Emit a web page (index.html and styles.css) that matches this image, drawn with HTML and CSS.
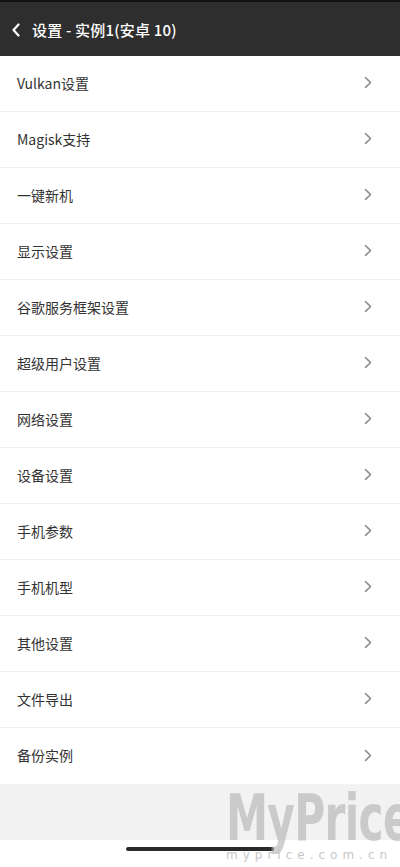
FILE: index.html
```html
<!DOCTYPE html>
<html lang="zh">
<head>
<meta charset="utf-8">
<link rel="stylesheet" href="styles.css">
</head>
<body>
<div class="page">
  <header class="topbar">
    <svg class="back" width="10" height="14" viewBox="0 0 10 14"><path d="M7.5 1.5 L2.5 7 L7.5 12.5" fill="none" stroke="#fff" stroke-width="2.2" stroke-linecap="round" stroke-linejoin="round"/></svg>
    <span class="title">设置 - 实例1(安卓 10)</span>
  </header>
  <ul class="list">
    <li class="row"><span>Vulkan设置</span><svg class="chev" width="8" height="13" viewBox="0 0 8 13"><path d="M1.5 1.5 L6.5 6.5 L1.5 11.5" fill="none" stroke="#8a8a8a" stroke-width="1.6" stroke-linecap="round" stroke-linejoin="round"/></svg></li>
    <li class="row"><span>Magisk支持</span><svg class="chev" width="8" height="13" viewBox="0 0 8 13"><path d="M1.5 1.5 L6.5 6.5 L1.5 11.5" fill="none" stroke="#8a8a8a" stroke-width="1.6" stroke-linecap="round" stroke-linejoin="round"/></svg></li>
    <li class="row"><span>一键新机</span><svg class="chev" width="8" height="13" viewBox="0 0 8 13"><path d="M1.5 1.5 L6.5 6.5 L1.5 11.5" fill="none" stroke="#8a8a8a" stroke-width="1.6" stroke-linecap="round" stroke-linejoin="round"/></svg></li>
    <li class="row"><span>显示设置</span><svg class="chev" width="8" height="13" viewBox="0 0 8 13"><path d="M1.5 1.5 L6.5 6.5 L1.5 11.5" fill="none" stroke="#8a8a8a" stroke-width="1.6" stroke-linecap="round" stroke-linejoin="round"/></svg></li>
    <li class="row"><span>谷歌服务框架设置</span><svg class="chev" width="8" height="13" viewBox="0 0 8 13"><path d="M1.5 1.5 L6.5 6.5 L1.5 11.5" fill="none" stroke="#8a8a8a" stroke-width="1.6" stroke-linecap="round" stroke-linejoin="round"/></svg></li>
    <li class="row"><span>超级用户设置</span><svg class="chev" width="8" height="13" viewBox="0 0 8 13"><path d="M1.5 1.5 L6.5 6.5 L1.5 11.5" fill="none" stroke="#8a8a8a" stroke-width="1.6" stroke-linecap="round" stroke-linejoin="round"/></svg></li>
    <li class="row"><span>网络设置</span><svg class="chev" width="8" height="13" viewBox="0 0 8 13"><path d="M1.5 1.5 L6.5 6.5 L1.5 11.5" fill="none" stroke="#8a8a8a" stroke-width="1.6" stroke-linecap="round" stroke-linejoin="round"/></svg></li>
    <li class="row"><span>设备设置</span><svg class="chev" width="8" height="13" viewBox="0 0 8 13"><path d="M1.5 1.5 L6.5 6.5 L1.5 11.5" fill="none" stroke="#8a8a8a" stroke-width="1.6" stroke-linecap="round" stroke-linejoin="round"/></svg></li>
    <li class="row"><span>手机参数</span><svg class="chev" width="8" height="13" viewBox="0 0 8 13"><path d="M1.5 1.5 L6.5 6.5 L1.5 11.5" fill="none" stroke="#8a8a8a" stroke-width="1.6" stroke-linecap="round" stroke-linejoin="round"/></svg></li>
    <li class="row"><span>手机机型</span><svg class="chev" width="8" height="13" viewBox="0 0 8 13"><path d="M1.5 1.5 L6.5 6.5 L1.5 11.5" fill="none" stroke="#8a8a8a" stroke-width="1.6" stroke-linecap="round" stroke-linejoin="round"/></svg></li>
    <li class="row"><span>其他设置</span><svg class="chev" width="8" height="13" viewBox="0 0 8 13"><path d="M1.5 1.5 L6.5 6.5 L1.5 11.5" fill="none" stroke="#8a8a8a" stroke-width="1.6" stroke-linecap="round" stroke-linejoin="round"/></svg></li>
    <li class="row"><span>文件导出</span><svg class="chev" width="8" height="13" viewBox="0 0 8 13"><path d="M1.5 1.5 L6.5 6.5 L1.5 11.5" fill="none" stroke="#8a8a8a" stroke-width="1.6" stroke-linecap="round" stroke-linejoin="round"/></svg></li>
    <li class="row last"><span>备份实例</span><svg class="chev" width="8" height="13" viewBox="0 0 8 13"><path d="M1.5 1.5 L6.5 6.5 L1.5 11.5" fill="none" stroke="#8a8a8a" stroke-width="1.6" stroke-linecap="round" stroke-linejoin="round"/></svg></li>
  </ul>
  <div class="gray"></div>
  <div class="bottom"><div class="home"></div></div>
  <div class="wm">
    <div class="wm-big">MyPrice</div>
    <div class="wm-small">myprice.com.cn</div>
  </div>
</div>
</body>
</html>
```
FILE: styles.css
```css
* { box-sizing: border-box; }
html, body { margin: 0; padding: 0; background: #fff; }
body { font-family: "Noto Sans CJK SC", "Noto Sans", sans-serif; }
.page { position: relative; width: 400px; height: 867px; overflow: hidden; }
.topbar {
  height: 56px;
  background: #2e2e2e;
  border-top: 2px solid #111;
  display: flex;
  align-items: center;
  padding-left: 11px;
  gap: 11px;
  color: #fff;
}
.back { display: block; margin-top: 1px; }
.title { font-size: 15px; font-weight: 500; letter-spacing: 0.2px; }
.list { list-style: none; margin: 0; padding: 0; }
.row {
  height: 56px;
  display: flex;
  align-items: center;
  justify-content: space-between;
  padding: 0 28px 2px 17px;
  border-bottom: 1px solid #f1f1f1;
  font-size: 14px;
  color: #333;
}
.row.last { border-bottom: none; }
.chev { display: block; }
.gray { height: 56px; background: #f2f2f2; }
.bottom { height: 27px; display: flex; justify-content: center; padding-top: 7px; }
.home { width: 148px; height: 4px; border-radius: 2px; background: #2a2a2a; }
.wm { position: absolute; left: 226px; top: 790px; width: 174px; overflow: hidden; }
.wm-big {
  font-family: "DejaVu Sans", sans-serif;
  font-weight: bold;
  font-size: 64px;
  line-height: 56px;
  height: 56px;
  color: rgba(170,170,170,0.55);
  transform: scaleX(0.66);
  transform-origin: left top;
  letter-spacing: -1px;
  white-space: nowrap;
}
.wm-small {
  margin-top: 2px;
  font-family: "DejaVu Sans", sans-serif;
  font-size: 12px;
  line-height: 14px;
  letter-spacing: 5px;
  color: #c8c8c8;
  white-space: nowrap;
}
```
